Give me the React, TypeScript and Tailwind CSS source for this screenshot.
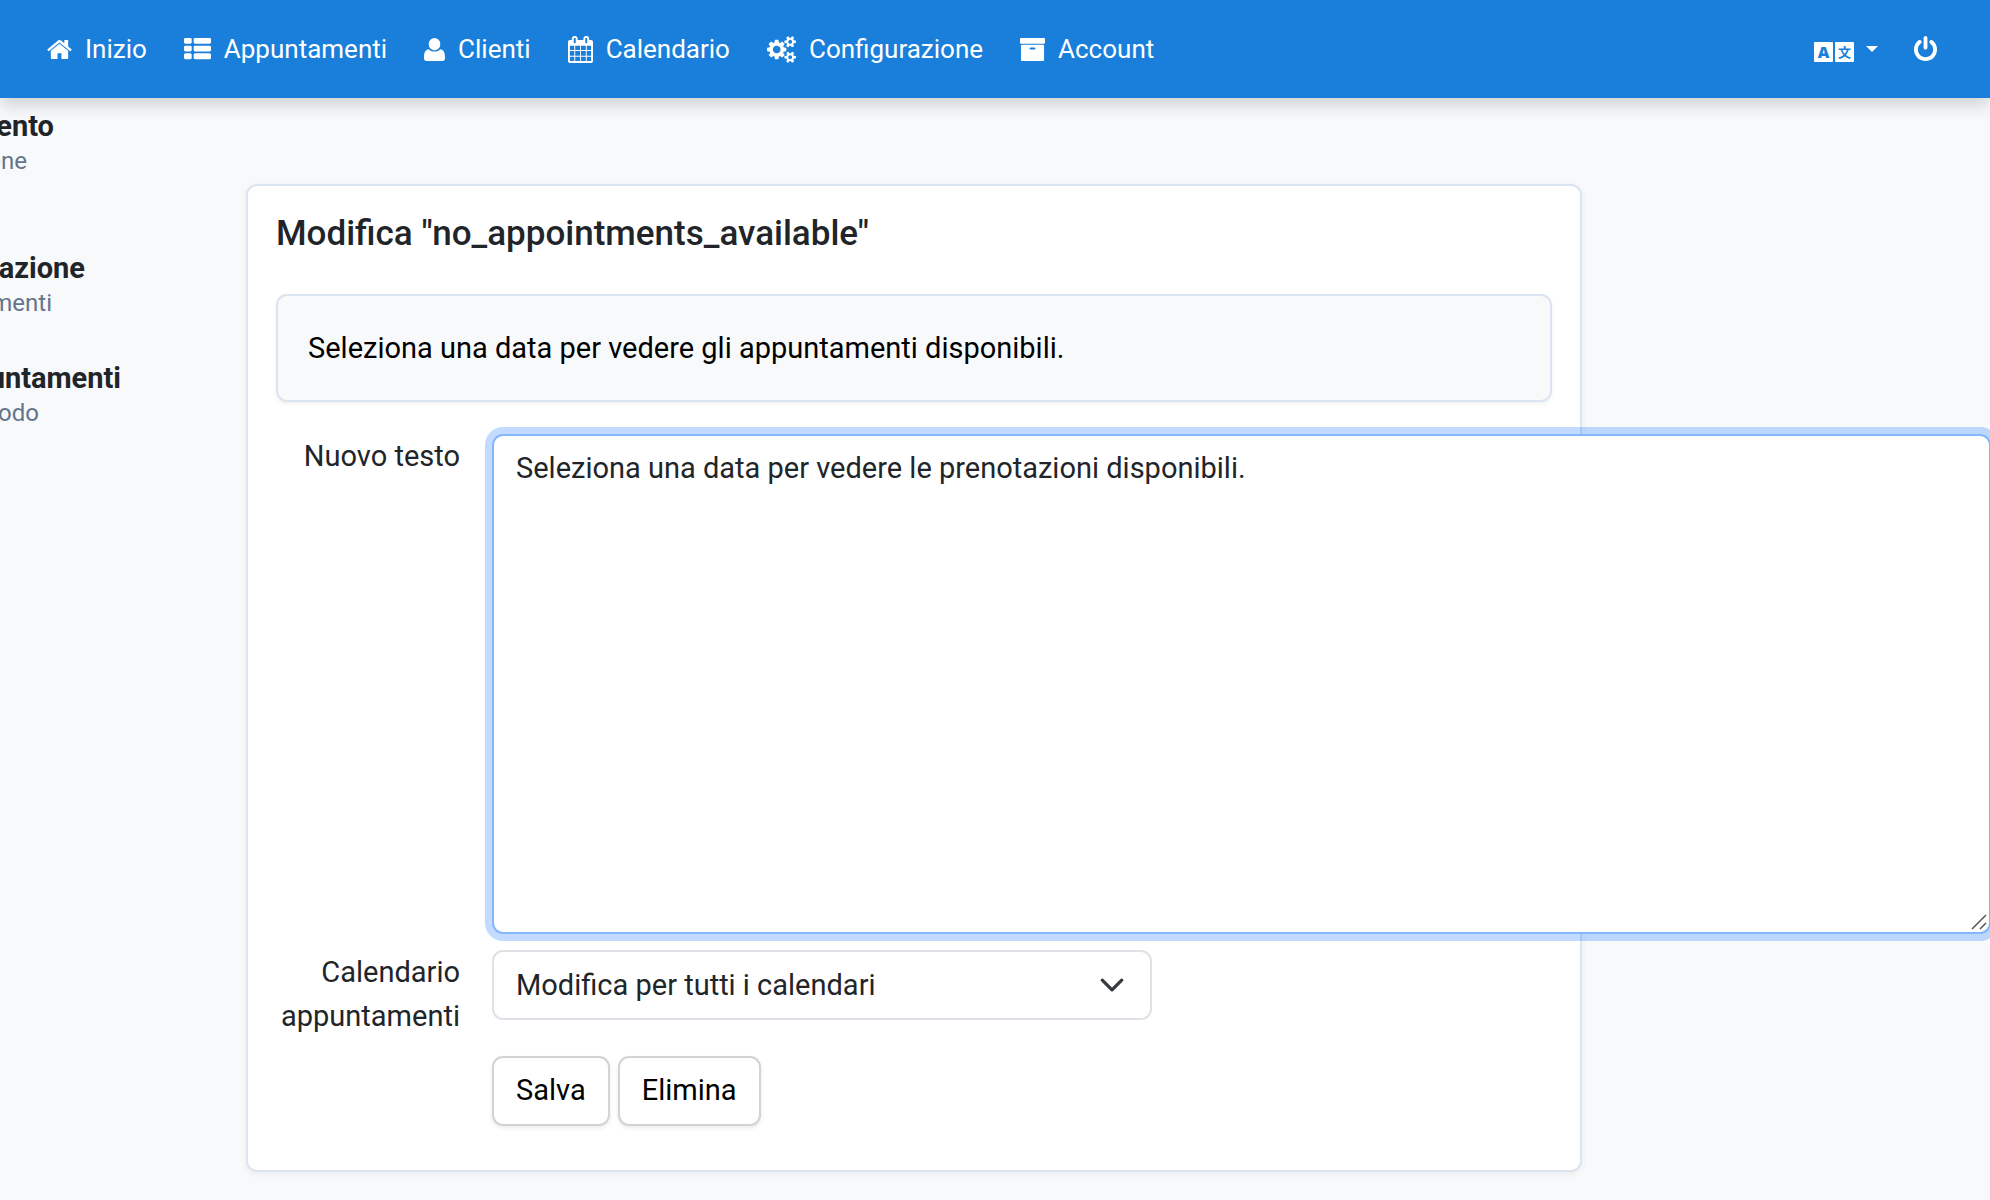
import { useState } from 'react';

interface IconProps {
  path: string;
  viewBox: string;
  className: string;
}

interface NavItem {
  label: string;
  icon: IconProps;
}

const navItems: NavItem[] = [
  {
    label: 'Inizio',
    icon: {
      viewBox: '64 0 1664 1792',
      className: 'w-[25px]',
      path: 'M1472 992v480q0 26-19 45t-45 19h-384v-384h-256v384h-384q-26 0-45-19t-19-45v-480q0-1 .5-3t.5-3l575-474 575 474q1 2 1 6zm223-69l-62 74q-8 9-21 11h-3q-13 0-21-7l-692-577-692 577q-12 8-24 7-13-2-21-11l-62-74q-8-10-7-23.500t11-21.500l719-599q32-26 76-26t76 26l244 204v-195q0-14 9-23t23-9h192q14 0 23 9t9 23v408l219 182q10 8 11 21.500t-7 23.500z',
    },
  },
  {
    label: 'Appuntamenti',
    icon: {
      viewBox: '0 0 1792 1792',
      className: 'w-[27px]',
      path: 'M512 1248v192q0 40-28 68t-68 28h-320q-40 0-68-28t-28-68v-192q0-40 28-68t68-28h320q40 0 68 28t28 68zm0-512v192q0 40-28 68t-68 28h-320q-40 0-68-28t-28-68v-192q0-40 28-68t68-28h320q40 0 68 28t28 68zm1280 512v192q0 40-28 68t-68 28h-960q-40 0-68-28t-28-68v-192q0-40 28-68t68-28h960q40 0 68 28t28 68zm-1280-1024v192q0 40-28 68t-68 28h-320q-40 0-68-28t-28-68v-192q0-40 28-68t68-28h320q40 0 68 28t28 68zm1280 512v192q0 40-28 68t-68 28h-960q-40 0-68-28t-28-68v-192q0-40 28-68t68-28h960q40 0 68 28t28 68zm0-512v192q0 40-28 68t-68 28h-960q-40 0-68-28t-28-68v-192q0-40 28-68t68-28h960q40 0 68 28t28 68z',
    },
  },
  {
    label: 'Clienti',
    icon: {
      viewBox: '0 -2 21 27',
      className: 'w-[21px]',
      path: 'M10.500 0a5.800 6.200 0 1 1 0 12.400a5.800 6.200 0 1 1 0-12.400zM4.600 11.200C6 12.600 8 13.500 10.500 13.500s4.500-.9 5.900-2.300C19.500 11.600 21 14.500 21 19v1.300c0 1.700-1 2.700-2.500 2.700h-16C1 23 0 22 0 20.300V19C0 14.500 1.500 11.600 4.600 11.200z',
    },
  },
  {
    label: 'Calendario',
    icon: {
      viewBox: '64 0 1664 1792',
      className: 'w-[25px]',
      path: 'M192 1664h288v-288h-288v288zm352 0h320v-288h-320v288zm-352-352h288v-320h-288v320zm352 0h320v-320h-320v320zm-352-384h288v-288h-288v288zm736 736h320v-288h-320v288zm-384-736h320v-288h-320v288zm768 736h288v-288h-288v288zm-384-352h320v-320h-320v320zm-352-864v-288q0-13-9.500-22.500t-22.500-9.500h-64q-13 0-22.500 9.500t-9.500 22.500v288q0 13 9.500 22.500t22.500 9.500h64q13 0 22.500-9.500t9.500-22.500zm736 864h288v-320h-288v320zm-384-384h320v-288h-320v288zm384 0h288v-288h-288v288zm32-480v-288q0-13-9.500-22.500t-22.500-9.500h-64q-13 0-22.500 9.500t-9.500 22.500v288q0 13 9.500 22.500t22.500 9.500h64q13 0 22.500-9.500t9.500-22.500zm384-64v1280q0 52-38 90t-90 38h-1408q-52 0-90-38t-38-90v-1280q0-52 38-90t90-38h128v-96q0-66 47-113t113-47h64q66 0 113 47t47 113v96h384v-96q0-66 47-113t113-47h64q66 0 113 47t47 113v96h128q52 0 90 38t38 90z',
    },
  },
  {
    label: 'Configurazione',
    icon: {
      viewBox: '0 0 1920 1792',
      className: 'w-[29px]',
      path: 'M896 896q0-106-75-181t-181-75-181 75-75 181 75 181 181 75 181-75 75-181zm768 512q0-52-38-90t-90-38-90 38-38 90q0 53 37.500 90.500t90.500 37.500 90.500-37.500 37.500-90.500zm0-1024q0-52-38-90t-90-38-90 38-38 90q0 53 37.500 90.500t90.500 37.500 90.500-37.500 37.500-90.500zm-384 421v185q0 10-7 19.500t-16 10.500l-155 24q-11 35-32 76 34 48 90 115 7 11 7 20 0 12-7 19-23 30-82.500 89.500t-78.500 59.500q-11 0-21-7l-115-90q-37 19-77 31-11 108-23 155-7 24-30 24h-186q-11 0-20-7.500t-10-17.500l-23-153q-34-10-75-31l-118 89q-7 7-20 7-11 0-21-8-144-133-144-160 0-9 7-19 10-14 41-53t47-61q-23-44-35-82l-152-24q-10-1-17-9.500t-7-19.500v-185q0-10 7-19.500t16-10.500l155-24q11-35 32-76-34-48-90-115-7-11-7-20 0-12 7-20 22-30 82-89t79-59q11 0 21 7l115 90q34-18 77-32 11-108 23-154 7-24 30-24h186q11 0 20 7.500t10 17.500l23 153q34 10 75 31l118-89q8-7 20-7 11 0 21 8 144 133 144 160 0 8-7 19-12 16-42 54t-45 60q23 48 34 82l152 23q10 2 17 10.500t7 19.500zm640 533v140q0 16-149 31-12 27-30 52 51 113 51 138 0 4-4 7-122 71-124 71-8 0-46-47t-52-68q-20 2-30 2t-30-2q-14 21-52 68t-46 47q-2 0-124-71-4-3-4-7 0-25 51-138-18-25-30-52-149-15-149-31v-140q0-16 149-31 13-29 30-52-51-113-51-138 0-4 4-7 4-2 35-20t59-34 30-16q8 0 46 46.500t52 67.500q20-2 30-2t30 2q51-71 92-112l6-2q4 0 124 70 4 3 4 7 0 25-51 138 17 23 30 52 149 15 149 31zm0-1024v140q0 16-149 31-12 27-30 52 51 113 51 138 0 4-4 7-122 71-124 71-8 0-46-47t-52-68q-20 2-30 2t-30-2q-14 21-52 68t-46 47q-2 0-124-71-4-3-4-7 0-25 51-138-18-25-30-52-149-15-149-31v-140q0-16 149-31 13-29 30-52-51-113-51-138 0-4 4-7 4-2 35-20t59-34 30-16q8 0 46 46.500t52 67.500q20-2 30-2t30 2q51-71 92-112l6-2q4 0 124 70 4 3 4 7 0 25-51 138 17 23 30 52 149 15 149 31z',
    },
  },
  {
    label: 'Account',
    icon: {
      viewBox: '64 0 1664 1792',
      className: 'w-[25px]',
      path: 'M1088 832q0-26-19-45t-45-19h-256q-26 0-45 19t-19 45 19 45 45 19h256q26 0 45-19t19-45zm576-192v960q0 26-19 45t-45 19h-1408q-26 0-45-19t-19-45v-960q0-26 19-45t45-19h1408q26 0 45 19t19 45zm64-448v256q0 26-19 45t-45 19h-1536q-26 0-45-19t-19-45v-256q0-26 19-45t45-19h1536q26 0 45 19t19 45z',
    },
  },
];

const powerIcon: IconProps = {
  viewBox: '128 0 1536 1792',
  className: 'w-[23px]',
  path: 'M1664 896q0 156-61 298t-164 245-245 164-298 61-298-61-245-164-164-245-61-298q0-182 80.500-343t226.500-270q43-32 95.500-25t83.500 50q32 42 24.500 94.500t-49.500 84.500q-98 74-151.500 181t-53.500 228q0 104 40.500 198.500t109.500 163.500 163.500 109.500 198.500 40.500 198.500-40.500 163.500-109.500 109.500-163.500 40.500-198.500q0-121-53.500-228t-151.500-181q-42-32-49.500-84.500t24.500-94.500q31-43 84-50t95 25q146 109 226.500 270t80.500 343zm-640-768v640q0 52-38 90t-90 38-90-38-38-90v-640q0-52 38-90t90-38 90 38 38 90z',
};

function Icon({ path, viewBox, className }: IconProps) {
  return (
    <svg viewBox={viewBox} className={`h-[27px] shrink-0 fill-current ${className}`} aria-hidden="true">
      <path d={path} />
    </svg>
  );
}

function Header() {
  return (
    <header className="relative z-10 flex h-[98px] items-center justify-between bg-[#1a7fda] pr-[53px] pl-[47px] text-[26px] leading-10 text-white shadow-[0_8px_15px_rgba(0,0,0,0.15)]">
      <nav className="flex items-center gap-[37px]">
        {navItems.map((item) => (
          <a key={item.label} href="#" className="flex items-center gap-[13px]">
            <Icon {...item.icon} />
            {item.label}
          </a>
        ))}
      </nav>
      <div className="flex items-center gap-9">
        <button type="button" aria-label="Lingua" className="flex items-center gap-3">
          <span className="flex gap-0.5 pt-1.5 text-[#1a7fda]">
            <span className="flex h-5 w-[19px] items-center justify-center rounded-[1px] bg-white font-['Open_Sans',sans-serif] text-base font-extrabold">A</span>
            <span className="flex h-5 w-[19px] items-center justify-center rounded-[1px] bg-white font-['Noto_Sans_CJK_SC',sans-serif] text-[13px] font-bold">文</span>
          </span>
          <svg viewBox="0 0 12 6" className="h-1.5 w-3 fill-current" aria-hidden="true">
            <path d="M0 0h12L6 6z" />
          </svg>
        </button>
        <a href="#" aria-label="Esci">
          <Icon {...powerIcon} />
        </a>
      </div>
    </header>
  );
}

function Sidebar() {
  return (
    <aside className="w-[246px] shrink-0 overflow-hidden pt-1.5 whitespace-nowrap">
      <div className="mb-[72px]">
        <div className="flex w-[54px] justify-end text-[29px] leading-11 font-bold">ento</div>
        <div className="flex w-[27px] justify-end text-2xl leading-[26px] text-[#64748b]">one</div>
      </div>
      <div className="mb-10">
        <div className="flex w-[85px] justify-end text-[29px] leading-11 font-bold">azione</div>
        <div className="flex w-[52px] justify-end text-2xl leading-[26px] text-[#64748b]">menti</div>
      </div>
      <div>
        <div className="flex w-[121px] justify-end text-[29px] leading-11 font-bold">untamenti</div>
        <div className="flex w-[39px] justify-end text-2xl leading-[26px] text-[#64748b]">odo</div>
      </div>
    </aside>
  );
}

export default function App() {
  const [text, setText] = useState('Seleziona una data per vedere le prenotazioni disponibili.');

  return (
    <div className="min-h-screen overflow-hidden bg-[#f8f9fb] font-[Roboto,sans-serif] text-[29px] leading-11 text-[#212529]">
      <Header />
      <div className="flex pb-7">
        <Sidebar />
        <main className="mt-[86px] w-full max-w-[1336px] min-w-0 rounded-[11px] border-2 border-[#dce4f1] bg-white p-7 shadow-[0_2px_6px_rgba(0,0,0,0.06)]">
          <h1 className="mb-10 text-[35px] leading-10 font-medium">
            Modifica "no_appointments_available"
          </h1>
          <div className="mb-8 rounded-[11px] border-2 border-[#dce4f1] bg-[#f8f9fb] p-[30px] text-black shadow-[0_2px_4px_rgba(0,0,0,0.06)]">
            Seleziona una data per vedere gli appuntamenti disponibili.
          </div>
          <form onSubmit={(e) => e.preventDefault()}>
            <div className="mb-4 flex gap-8">
              <label htmlFor="text" className="w-[184px] shrink-0 text-right">Nuovo testo</label>
              <div className="relative">
                <textarea
                  id="text"
                  value={text}
                  onChange={(e) => setText(e.target.value)}
                  className="block h-[500px] w-[calc(100vw-491px)] resize-none rounded-[11px] border-2 border-[#86b7fe] bg-white px-[22px] py-2.5 shadow-[0_0_0_7px_rgba(13,110,253,0.25)] outline-none"
                />
                <svg viewBox="0 0 16 16" className="pointer-events-none absolute right-1 bottom-1 size-4 stroke-[#555]" aria-hidden="true">
                  <path d="M1 15 15 1M9 15l6-6" strokeWidth="1.5" fill="none" />
                </svg>
              </div>
            </div>
            <div className="mb-[18px] flex items-start gap-8">
              <label htmlFor="calendar" className="w-[184px] shrink-0 text-right">Calendario appuntamenti</label>
              <div className="relative w-[660px]">
                <select
                  id="calendar"
                  className="block h-[70px] w-full appearance-none rounded-[11px] border-2 border-[#dee2e6] bg-white pr-16 pl-[22px]"
                >
                  <option>Modifica per tutti i calendari</option>
                </select>
                <svg viewBox="0 0 16 16" className="pointer-events-none absolute top-[22px] right-[27px] size-[26px] fill-none stroke-[#343a40]" aria-hidden="true">
                  <path d="m2 5 6 6 6-6" strokeWidth="2" strokeLinecap="round" strokeLinejoin="round" />
                </svg>
              </div>
            </div>
            <div className="mb-4 ml-[216px] flex gap-2">
              <button type="submit" className="rounded-[11px] border-2 border-[#d3d3d3] bg-white px-[22px] pt-[10px] pb-3 text-black shadow-[0_2px_4px_rgba(0,0,0,0.08)]">
                Salva
              </button>
              <button type="button" className="rounded-[11px] border-2 border-[#d3d3d3] bg-white px-[22px] pt-[10px] pb-3 text-black shadow-[0_2px_4px_rgba(0,0,0,0.08)]">
                Elimina
              </button>
            </div>
          </form>
        </main>
      </div>
    </div>
  );
}
